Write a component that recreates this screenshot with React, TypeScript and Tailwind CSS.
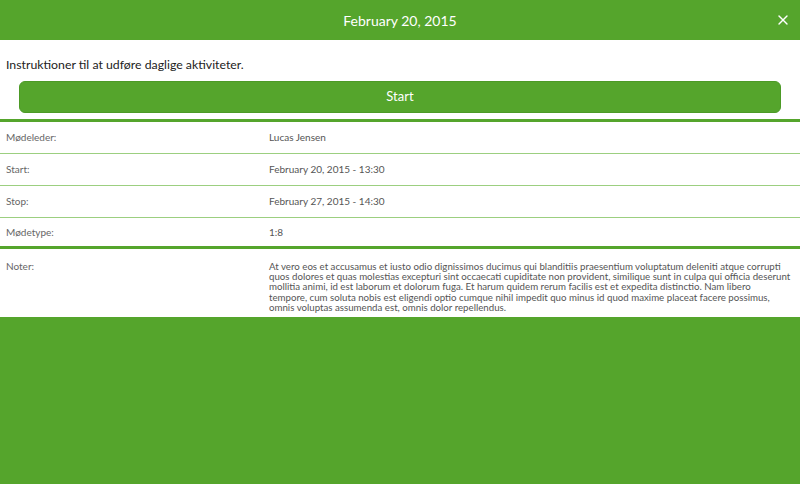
import React from 'react';
import { X } from 'lucide-react';

const rows = [
  { label: 'Mødeleder:', value: 'Lucas Jensen' },
  { label: 'Start:', value: 'February 20, 2015 - 13:30' },
  { label: 'Stop:', value: 'February 27, 2015 - 14:30' },
  { label: 'Mødetype:', value: '1:8' },
];

const noteLines = [
  'At vero eos et accusamus et iusto odio dignissimos ducimus qui blanditiis praesentium voluptatum deleniti atque corrupti',
  'quos dolores et quas molestias excepturi sint occaecati cupiditate non provident, similique sunt in culpa qui officia deserunt',
  'mollitia animi, id est laborum et dolorum fuga. Et harum quidem rerum facilis est et expedita distinctio. Nam libero',
  'tempore, cum soluta nobis est eligendi optio cumque nihil impedit quo minus id quod maxime placeat facere possimus,',
  'omnis voluptas assumenda est, omnis dolor repellendus.',
];

export default function App() {
  return (
    <div className="w-[800px] h-[484px] bg-[#55a52c] font-['Lato',sans-serif]">
      {/* Header */}
      <div className="relative h-10 flex items-center justify-center text-white text-[14px]">
        February 20, 2015
        <X size={16} strokeWidth={2} className="absolute right-[9px] top-[12px]" />
      </div>

      <div className="bg-white">
        {/* Intro + start */}
        <div className="px-[6px] pb-[6px] border-b-[3px] border-[#55a52c]">
          <div className="pt-[16px] leading-[18px] text-[12.3px] text-[#222]">
            Instruktioner til at udføre daglige aktiviteter.
          </div>
          <button className="mt-[7px] ml-[13px] w-[762px] h-[32px] rounded-[6px] bg-[#55a52c] border border-[#4c9a26] text-white text-[13px]">
            Start
          </button>
        </div>

        {/* Details */}
        {rows.map((r, i) => (
          <div
            key={r.label}
            className={
              i === rows.length - 1
                ? 'grid grid-cols-[263px_1fr] px-[6px] h-[31px] items-center text-[10px] text-[#555] border-b-[3px] border-[#55a52c]'
                : 'grid grid-cols-[263px_1fr] px-[6px] h-[32px] items-center text-[10px] text-[#555] border-b border-[#9ccf80]'
            }
          >
            <div className="text-[#666]">{r.label}</div>
            <div>{r.value}</div>
          </div>
        ))}

        {/* Notes */}
        <div className="grid grid-cols-[263px_1fr] px-[6px] pt-[12px] pb-[4px] h-[68px] text-[10px] leading-[10.2px] text-[#555]">
          <div className="text-[#666]">Noter:</div>
          <div className="text-[9.7px]">
            {noteLines.map((l) => (
              <div key={l} className="whitespace-nowrap">{l}</div>
            ))}
          </div>
        </div>
      </div>
    </div>
  );
}
